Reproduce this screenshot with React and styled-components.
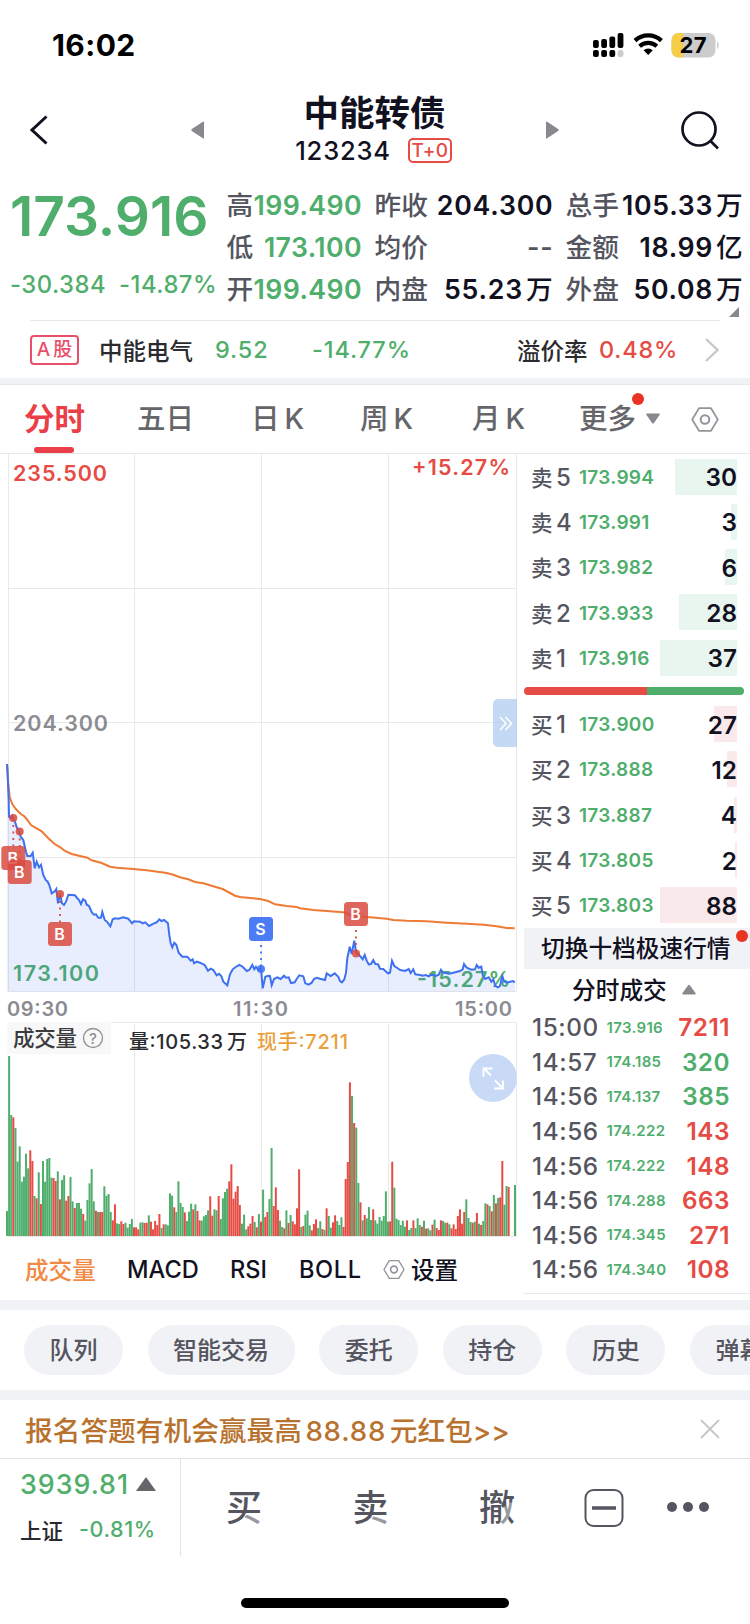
import React from 'react'
import styled, { createGlobalStyle, css } from 'styled-components'

const RED = '#e64b44'
const GREEN = '#4fae6c'
const INK = '#11111f'
const SLATE = '#55555f'
const BAND = '#f1f2f6'
const LINE = '#e9e9eb'

const GlobalStyle = createGlobalStyle`
  * {
    box-sizing: border-box;
  }

  body {
    margin: 0;
    background: #fff;
    color: ${INK};
    font-family: Inter, 'Noto Sans CJK SC', sans-serif;
    font-weight: 500;
    overflow: hidden;
  }
`

const Screen = styled.div`
  width: 750px;
  height: 1624px;
  background: #fff;
  overflow: hidden;
  white-space: nowrap;
`

// ---------- status bar ----------
const StatusBar = styled.div`
  display: flex;
  justify-content: space-between;
  align-items: center;
  height: 86px;
  padding: 4px 31px 0 52px;
`

const Clock = styled.div`
  font-size: 30px;
  font-weight: 700;
  color: #000;
  letter-spacing: 0.4px;
`

// ---------- header ----------
const Header = styled.header`
  display: flex;
  justify-content: space-between;
  align-items: center;
  height: 88px;
  padding: 0 30px 0 29px;
`

const Switcher = styled.div`
  display: flex;
  align-items: center;
  justify-content: space-between;
  width: 368px;
  margin-left: 20px;
`

const TitleBlock = styled.div`
  display: flex;
  flex-direction: column;
  align-items: center;
`

const Title = styled.h1`
  margin: 0;
  padding-top: 1px;
  font-size: 35.5px;
  line-height: 40px;
  font-weight: 700;
`

const CodeRow = styled.div`
  display: flex;
  align-items: center;
  gap: 17px;
  height: 32px;
  margin: 0 2px 1px 0;
  font-size: 25.5px;
  letter-spacing: 0.8px;
`

const DayTag = styled.span`
  width: 44px;
  height: 25px;
  border: 2px solid ${RED};
  border-radius: 5px;
  color: ${RED};
  font-size: 19px;
  line-height: 21px;
  text-align: center;
  letter-spacing: 0.2px;
`

// ---------- quote ----------
const Quote = styled.section`
  position: relative;
  display: flex;
  height: 146px;
  padding: 10px 0 0 11px;
`

const PriceBlock = styled.div`
  width: 215.5px;
  color: ${GREEN};
`

const BigPrice = styled.div`
  margin-left: -1px;
  font-size: 55px;
  line-height: 64px;
  font-weight: 600;
  letter-spacing: 0;
`

const Change = styled.div`
  display: flex;
  gap: 13px;
  margin: 22px 0 0 -1px;
  font-size: 23.8px;
  line-height: 30px;
  letter-spacing: 0.5px;
`

const Stats = styled.div`
  display: flex;
`

const StatColumn = styled.dl`
  width: ${({ $width }) => $width}px;
  margin: 0 ${({ $gap }) => $gap}px 0 0;
`

const Stat = styled.div`
  display: flex;
  justify-content: space-between;
  height: 42px;
  font-size: 26.7px;
  line-height: 43px;
  color: ${SLATE};
`

const StatValue = styled.dd`
  margin: 0;
  font-size: 26.7px;
  letter-spacing: ${({ $spacing }) => $spacing}px;
  font-weight: 600;
  color: ${({ $color }) => $color || INK};
`

const Unit = styled.span`
  margin-left: ${({ $gap }) => $gap || 4}px;
  font-weight: 500;
`

const Corner = styled.svg`
  position: absolute;
  right: 11px;
  bottom: 3px;
`

const RelatedRow = styled.div`
  display: flex;
  align-items: center;
  height: 58px;
  margin: 0 30px;
  border-top: 1px solid ${LINE};
  font-size: 23.5px;
  color: #2b2b2f;
`

const MarketTag = styled.span`
  width: 49px;
  height: 30px;
  margin-right: 20px;
  border: 2px solid #e8506a;
  border-radius: 4px;
  color: #e8506a;
  font-size: 19px;
  line-height: 26px;
  text-align: center;
`

const Cell = styled.span`
  width: ${({ $width }) => $width}px;
  letter-spacing: ${({ $spacing }) => $spacing || 0}px;
  color: ${({ $color }) => $color || 'inherit'};
`

const Band = styled.div`
  height: ${({ $height }) => $height || 10}px;
  background: ${BAND};
`

// ---------- period tabs ----------
const Tabs = styled.nav`
  display: flex;
  align-items: center;
  height: 70px;
  padding-left: 24px;
  border-top: 1px solid ${LINE};
  border-bottom: 1px solid ${LINE};
`

const Tab = styled.span`
  position: relative;
  width: ${({ $width }) => $width}px;
  font-size: 28.5px;
  line-height: 68px;
  color: #66666a;

  ${({ $active }) =>
    $active &&
    css`
      font-size: 30.5px;
      font-weight: 700;
      color: #ea3f48;

      &::after {
        content: '';
        position: absolute;
        left: 10px;
        bottom: 0;
        width: 40px;
        height: 6px;
        border-radius: 3px;
        background: #ea3f48;
      }
    `}
`

const Dot = styled.i`
  position: absolute;
  top: ${({ $top }) => $top}px;
  right: ${({ $right }) => $right}px;
  width: 12px;
  height: 12px;
  border-radius: 50%;
  background: #ea3323;
`

// ---------- body ----------
const Body = styled.main`
  display: flex;
  height: 846px;
`

const ChartColumn = styled.div`
  width: 517px;
`

const Plot = styled.svg`
  display: block;
`

const Indicators = styled.div`
  display: flex;
  align-items: center;
  height: 62px;
  padding-left: 25px;
  font-size: 23.6px;
`

const Book = styled.aside`
  width: 226px;
  height: 840px;
  margin-left: 7px;
  border-bottom: 1px solid ${LINE};
`

const BookRow = styled.div`
  position: relative;
  display: flex;
  align-items: center;
  height: 45.3px;
  padding: 1px 13px 0 7px;
`

const BookLabel = styled.span`
  display: flex;
  align-items: center;
  width: 48px;
  font-size: 24px;
  color: ${SLATE};

  b {
    width: 25px;
    margin-top: -2px;
    font-size: 21.5px;
    font-weight: 500;
  }
`

const BookPrice = styled.span`
  font-size: 19px;
  font-weight: 600;
  letter-spacing: 0.3px;
  color: ${GREEN};
`

const BookAmount = styled.span`
  position: relative;
  margin-left: auto;
  font-size: 24.3px;
  font-weight: 600;
`

const Depth = styled.i`
  position: absolute;
  right: 13px;
  top: 4.5px;
  height: 36px;
  background: ${({ $side }) => ($side === '卖' ? '#e9f6ef' : '#fae9ea')};
`

const Ratio = styled.div`
  width: 220px;
  height: 8px;
  margin: 6.5px 0;
  border-radius: 4px;
  background: linear-gradient(to right, ${RED} 123px, ${GREEN} 123px);
`

const DepthSwitch = styled.div`
  position: relative;
  height: 41px;
  padding-left: 17px;
  background: ${BAND};
  font-size: 23.7px;
  line-height: 42px;
`

const TradesTitle = styled.div`
  display: flex;
  align-items: center;
  gap: 15px;
  height: 41px;
  padding-left: 48px;
  font-size: 23.7px;
`

const Trade = styled.div`
  display: flex;
  align-items: center;
  height: 34.57px;
  padding: 0 20px 0 8px;
`

const TradeTime = styled.span`
  width: 74.5px;
  font-size: 24.3px;
  letter-spacing: 0.6px;
  color: ${SLATE};
`

const TradePrice = styled.span`
  font-size: 15px;
  font-weight: 600;
  letter-spacing: 0.35px;
  color: ${GREEN};
`

const TradeAmount = styled.span`
  margin-left: auto;
  font-size: 24.3px;
  font-weight: 600;
  letter-spacing: 0.5px;
  color: ${({ $up }) => ($up ? RED : GREEN)};
`

// ---------- lower part ----------
const Pills = styled.div`
  display: flex;
  gap: 24.6px;
  height: 80px;
  padding: 15px 0 0 24px;
`

const Pill = styled.span`
  flex: none;
  height: 50px;
  padding: 0 25.5px;
  border-radius: 25px;
  background: ${BAND};
  font-size: 24px;
  line-height: 51px;
  color: ${SLATE};
`

const Banner = styled.div`
  display: flex;
  justify-content: space-between;
  align-items: center;
  height: 59px;
  padding: 0 30px 0 25px;
  border-bottom: 1px solid #e2e2e4;
  font-size: 27.7px;
  color: #b8722e;
`

const BannerSum = styled.span`
  margin: 0 3.5px;
  letter-spacing: 0.8px;
`

const BottomBar = styled.footer`
  display: flex;
  height: 97px;
`

const IndexBlock = styled.div`
  width: 181px;
  padding: 7px 0 0 20px;
  border-right: 1px solid #e2e2e4;
`

const IndexRow = styled.div`
  display: flex;
  align-items: center;
  gap: ${({ $gap }) => $gap}px;
  height: 36px;
  margin-bottom: 9px;
  font-size: ${({ $size }) => $size}px;
  color: ${({ $color }) => $color};
`

const Actions = styled.div`
  display: flex;
  align-items: center;
  padding-left: 45px;
`

// part of the last stroke is washed out
const Action = styled.span`
  position: relative;
  width: ${({ $width }) => $width || 126.5}px;
  font-size: 36px;
  line-height: 50px;
  color: ${SLATE};

  &::after {
    content: '';
    position: absolute;
    left: 0;
    top: 0;
    width: 38px;
    height: 50px;
    background: rgba(255, 255, 255, 0.4);
    clip-path: ${({ $fade }) => $fade};
  }
`

const HomeIndicator = styled.div`
  width: 268px;
  height: 10px;
  margin: 42px auto 0;
  border-radius: 5px;
  background: #000;
`

// ---------- data ----------
const statColumns = [
  { width: 135.5, gap: 12.5, spacing: 0.4, rows: [['高', '199.490'], ['低', '173.100'], ['开', '199.490']], color: GREEN },
  { width: 179, gap: 12, spacing: 0.8, rows: [['昨收', '204.300'], ['均价', '--'], ['内盘', '55.23', '万']] },
  { width: 178, gap: 0, spacing: 0.7, rows: [['总手', '105.33', '万'], ['金额', '18.99', '亿'], ['外盘', '50.08', '万']] },
]

const asks = [
  [5, '173.994', 30, 62],
  [4, '173.991', 3, 6],
  [3, '173.982', 6, 12],
  [2, '173.933', 28, 58],
  [1, '173.916', 37, 77],
]

const bids = [
  [1, '173.900', 27, 23],
  [2, '173.888', 12, 10],
  [3, '173.887', 4, 3],
  [4, '173.805', 2, 2],
  [5, '173.803', 88, 77],
]

const trades = [
  ['15:00', '173.916', 7211, true],
  ['14:57', '174.185', 320, false],
  ['14:56', '174.137', 385, false],
  ['14:56', '174.222', 143, true],
  ['14:56', '174.222', 148, true],
  ['14:56', '174.288', 663, true],
  ['14:56', '174.345', 271, true],
  ['14:56', '174.340', 108, true],
]

const pills = ['队列', '智能交易', '委托', '持仓', '历史', '弹幕']

// samples are stored in thirds of a pixel, one list per trading session
const priceAm =
  '21,72 22,80 26,180 27,230 33,235 37,228 40,238 45,245 50,262 58,275 62,290 70,300 78,335 82,348 92,348 98,338 104,385 110,365 117,382 123,374 130,405 137,420 143,425 148,435 155,460 165,453 169,447 174,490 180,462 186,490 192,495 198,485 205,464 225,466 232,475 237,480 243,492 249,478 256,482 260,494 267,498 276,518 282,524 288,523 295,533 303,533 307,516 314,540 321,545 331,559 338,538 345,535 355,536 370,532 385,536 396,550 402,544 420,545 428,550 436,547 447,558 462,550 470,547 478,538 484,543 492,540 504,550 508,585 512,610 517,622 523,608 529,614 536,638 547,650 562,650 572,662 578,658 582,670 590,665 600,668 614,675 624,692 632,686 640,690 650,706 657,701 664,708 670,725 682,736 690,703 698,688 707,681 718,675 728,680 740,693 748,690 757,675 763,688 768,680 775,690 783,684'
const pricePm =
  '3,865 8,925 16,890 25,887 30,888 35,916 42,897 52,892 62,897 72,887 78,893 86,892 93,909 104,907 110,897 118,886 130,889 136,910 146,914 155,908 162,897 170,893 180,896 195,900 200,880 212,888 224,880 235,890 240,903 246,907 253,898 258,878 262,835 269,800 275,822 279,802 283,782 288,815 294,822 302,830 308,838 314,825 320,842 326,853 333,852 340,840 346,852 354,853 360,866 370,867 376,873 384,880 390,878 396,842 403,858 412,864 421,870 435,873 446,867 452,879 460,868 466,883 480,885 488,887 498,885 506,889 515,884 528,888 536,884 543,869 549,878 560,880 568,881 580,878 600,873 608,868 612,852 620,863 634,869 645,868 650,855 656,863 664,860 668,885 676,897 686,892 694,905 700,898 706,918 714,922 720,918 727,888 732,903 740,908 750,905 760,903 764,908'
const averageAm =
  '21,72 25,130 29,172 37,192 48,208 62,222 72,228 80,237 93,255 105,262 125,274 145,295 165,313 182,323 195,333 215,342 240,348 262,353 275,361 305,369 330,380 350,383 400,387 440,391 500,399 520,404 540,412 565,418 585,426 610,430 640,439 668,447 690,459 705,467 720,471 750,474'
const averagePm =
  '0,657 25,663 45,673 80,678 110,681 120,685 160,690 250,697 262,700 275,708 330,712 380,716 400,720 440,722 500,724 560,728 620,731 670,734 705,738 740,744 764,745'

const toPixels = (list, dx, dy) =>
  list.split(' ').map((pair) => {
    const [x, y] = pair.split(',')
    return `${(x / 3 + dx).toFixed(1)},${(y / 3 + dy).toFixed(1)}`
  })

const joinSessions = (am, pm) => [...toPixels(am, 0, 286), ...toPixels(pm, 260, 226)].join(' ')

const pricePoints = joinSessions(priceAm, pricePm)
const averagePoints = joinSessions(averageAm, averagePm)

// one entry per minute, colour letter + height in thirds of a pixel
const volumes = (
  'g75 g540 g363 r356 g324 g223 g269 g163 g178 g247 g203 r257 r225 g120 r113 g191 r96 g225 g163 g231 g234 g175 r174 r165 g194 r110 g168 g182 r106 r120 ' +
  'g177 g104 r84 g99 g99 g82 r66 g46 g108 g158 g201 g104 r76 g72 r72 r72 g149 g121 g126 g72 r47 r95 g38 g36 r44 r36 g40 g25 g36 g51 ' +
  'r26 r26 r20 g40 g41 r39 r40 g62 r43 r20 r45 r33 r66 g24 r35 g35 g32 g128 g121 r86 g72 g164 g99 g87 r71 g45 g73 g97 r80 g95 ' +
  'r75 r47 g46 g59 g63 g77 r119 r61 g80 g77 r120 g51 g113 g132 g142 r164 r215 r112 r133 r150 r93 g37 g64 g20 r29 r37 r60 g42 r26 g66 ' +
  'r43 g139 r57 r72 g111 g264 r90 r146 r78 g46 g27 r23 g77 r39 g63 r44 r35 r83 r200 g27 r30 g64 g76 g32 r17 r36 r50 g24 g44 r21 ' +
  'g18 r83 g60 g25 r41 r62 g45 g33 g56 r27 r171 r222 r461 g420 r339 g325 g159 r101 g47 r63 g53 g87 g48 r80 g47 g37 g57 g46 g60 g134 ' +
  'g43 r44 r223 g145 g52 g48 g33 g46 g28 r47 g18 g24 r47 g24 g53 g33 r28 g46 r22 g23 g17 r34 g49 r24 r18 r47 g45 g40 r40 g35 ' +
  'r23 r35 r21 r60 r80 r37 r72 g110 g54 g42 r40 g43 r69 g37 r33 g45 g98 r95 g90 r74 g123 r98 g114 r116 r225 g94 g150 r147 g0 g0 g153'
).split(' ')

const gridX = [134.5, 261.5, 388.5]

const marks = [
  { x: 13.3, dot: 364, box: 404, label: 'B' },
  { x: 19.7, dot: 377.5, box: 418, label: 'B' },
  { x: 60, dot: 440, box: 480, label: 'B' },
  { x: 261, dot: 515, box: 475, label: 'S' },
  { x: 356, dot: 499.5, box: 460, label: 'B' },
]

// ---------- drawings ----------
const Nut = ({ width, height }) => (
  <svg width={width} height={height} viewBox="0 0 28 25" fill="none" stroke="#94949a" strokeWidth="1.7">
    <path d="M8 1.2h12l6.8 11.3L20 23.8H8L1.2 12.5z" strokeLinejoin="round" />
    <circle cx="14" cy="12.5" r="4.3" strokeWidth="2" />
  </svg>
)

function StatusIcons() {
  return (
    <svg width="127" height="28" viewBox="0 0 127 28">
      {[0, 1, 2, 3].map((i) => (
        <g key={i}>
          <rect x={1 + i * 8.2} y={[9, 8, 5.5, 2][i]} width="5.8" height={[8, 9, 11.5, 15][i]} rx="2" />
          <rect x={1 + i * 8.2} y="19" width="5.8" height="7" rx="2" fill={i === 3 ? '#ccc' : '#000'} />
        </g>
      ))}
      <g fill="none" stroke="#000" strokeWidth="4.2">
        <path d="M43 9.6a19.5 19.5 0 0 1 26.4 0" />
        <path d="M47.6 15.2a12.8 12.8 0 0 1 17.2 0" />
      </g>
      <path d="M51.6 19.3a6.6 6.6 0 0 1 9.2 0L56.2 24z" />
      <clipPath id="battery">
        <rect x="79.5" y="2" width="44" height="24.5" rx="7" />
      </clipPath>
      <g clipPath="url(#battery)">
        <rect x="79" y="2" width="45" height="25" fill="#ccc" />
        <rect x="79" y="2" width="12" height="25" fill="#f5cd46" />
      </g>
      <path d="M125 10.5c2.4 1.2 2.4 6.3 0 7.5z" fill="#ccc" />
      <text x="101" y="22.2" textAnchor="middle" fontSize="22" fontWeight="700" textLength="27">27</text>
    </svg>
  )
}

function PriceChart() {
  return (
    <Plot width="517" height="568" fontSize="21.5" fontWeight="600">
      <g stroke={LINE} fill="none">
        {gridX.map((x) => <path key={x} d={`M${x} 0V537`} />)}
        {[134.5, 268.5, 403.5].map((y) => <path key={y} d={`M8 ${y}H516`} />)}
        <path d="M8.5 0V537.5H516.5V0" />
      </g>
      <text x="13" y="27" fill={RED} textLength="94">235.500</text>
      <text x="510" y="21" fill={RED} textAnchor="end" textLength="98">+15.27%</text>
      <text x="13" y="277" fill="#8b8b91" textLength="95">204.300</text>
      <text x="13" y="527" fill={GREEN} textLength="86">173.100</text>
      <text x="510" y="533" fill={GREEN} textAnchor="end" textLength="93">-15.27%</text>
      <polygon points={`7,537.5 ${pricePoints} 515,537.5`} fill="rgba(64,116,240,.12)" />
      <polyline points={averagePoints} fill="none" stroke="#ee7a34" strokeWidth="2" />
      <polyline points={pricePoints} fill="none" stroke="#3d71f2" strokeWidth="2" />
      {marks.map(({ x, dot, box, label }) => {
        const sell = label === 'S'
        const color = sell ? '#3d71f2' : '#d94b41'
        return (
          <g key={x}>
            <path
              d={box > dot ? `M${x} ${dot + 7}V${box - 12}` : `M${x} ${box + 16}V${dot}`}
              stroke={color}
              strokeWidth="1.8"
              strokeDasharray="2 4.5"
            />
            <circle cx={x} cy={dot} r="4" fill={color} opacity=".88" />
            <rect x={x - 12} y={box - 12} width="24" height="24" rx="3.5" fill={color} opacity={sell ? 0.92 : 0.85} />
            <text x={x - 0.5} y={box + 6} fill="#fff" fontSize="16" textAnchor="middle">{label}</text>
          </g>
        )
      })}
      <path d="M517 245H498a5 5 0 0 0-5 5V288a5 5 0 0 0 5 5H517z" fill="#9cc2ec" opacity=".6" />
      <path d="M500 263l6 6.5-6 6.5M505.5 263l6 6.5-6 6.5" fill="none" stroke="#fff" strokeWidth="1.6" />
      <g fill="#8b8b92" fontSize="20">
        <text x="7" y="561.5" textLength="61">09:30</text>
        <text x="233" y="561.5" textLength="55">11:30</text>
        <text x="455" y="561.5" textLength="57">15:00</text>
      </g>
    </Plot>
  )
}

function VolumeChart() {
  return (
    <Plot width="517" height="216" fontSize="20">
      <g stroke={LINE} fill="none">
        {gridX.map((x) => <path key={x} d={`M${x} 2V214`} />)}
        <path d="M8 .5H516.5V214.5H8" />
      </g>
      <rect x="7" y="0" width="104" height="32" fill="#f8f8f8" />
      <text x="13" y="24" fontSize="21.5" fill="#3c3c40" textLength="64">成交量</text>
      <circle cx="93" cy="16" r="9.5" fill="none" stroke="#8f8f96" strokeWidth="1.3" />
      <text x="93" y="21.5" fontSize="15" fill="#8f8f96" textAnchor="middle">?</text>
      <text x="129" y="26.5" fill="#2b2b2f" textLength="94">量:105.33</text>
      <text x="227" y="26.5" fill="#2b2b2f">万</text>
      <text x="257" y="26.5" fill="#eb9f3c" textLength="91">现手:7211</text>
      {volumes.map((entry, i) => {
        const height = Number(entry.slice(1)) / 3
        return (
          <rect
            key={i}
            x={6 + i * 2.1167}
            y={214 - height}
            width="2"
            height={height}
            fill={entry[0] === 'r' ? RED : GREEN}
          />
        )
      })}
      <circle cx="493" cy="56" r="24" fill="#c8daf6" />
      <path d="M491 53.5l-7-7M483.5 54.5v-8h9M495 58.5l7 7M494 66.5h9v-8" fill="none" stroke="#fff" strokeWidth="1.9" />
    </Plot>
  )
}

const BookRows = ({ side, rows }) =>
  rows.map(([level, price, amount, depth]) => (
    <BookRow key={level}>
      <Depth $side={side} style={{ width: depth }} />
      <BookLabel><b>{side}</b>{level}</BookLabel>
      <BookPrice>{price}</BookPrice>
      <BookAmount>{amount}</BookAmount>
    </BookRow>
  ))

export default function App() {
  return (
    <Screen>
      <GlobalStyle />
      <StatusBar>
        <Clock>16:02</Clock>
        <StatusIcons />
      </StatusBar>

      <Header>
        <svg width="20" height="32" fill="none" stroke={INK} strokeWidth="3">
          <path d="M17.5 2.5L3 16l14.5 13.5" />
        </svg>
        <Switcher>
          <svg width="13" height="18" fill="#88888f"><path d="M13 1v16q0 1-1.5 0L.8 10q-1-1 0-2L11.5 1q1.5-1 1.5 0z" /></svg>
          <TitleBlock>
            <Title>中能转债</Title>
            <CodeRow>123234<DayTag>T+0</DayTag></CodeRow>
          </TitleBlock>
          <svg width="13" height="18" fill="#88888f"><path d="M0 1v16q0 1 1.5 0l10.7-7q1-1 0-2L1.5 1Q0 0 0 1z" /></svg>
        </Switcher>
        <svg width="40" height="40" fill="none" stroke={INK} strokeWidth="2.7">
          <circle cx="19" cy="19" r="16.5" />
          <path d="M30 30.5l8 8" />
        </svg>
      </Header>

      <Quote>
        <PriceBlock>
          <BigPrice>173.916</BigPrice>
          <Change><span>-30.384</span><span>-14.87%</span></Change>
        </PriceBlock>
        <Stats>
          {statColumns.map(({ width, gap, spacing, rows, color }) => (
            <StatColumn key={rows[0][0]} $width={width} $gap={gap}>
              {rows.map(([name, value, unit]) => (
                <Stat key={name}>
                  <dt>{name}</dt>
                  <StatValue $spacing={spacing} $color={value === '--' ? SLATE : color}>
                    {value}
                    {unit && <Unit $gap={3}>{unit}</Unit>}
                  </StatValue>
                </Stat>
              ))}
            </StatColumn>
          ))}
        </Stats>
        <Corner width="10" height="10"><path d="M10 0v10H0z" fill="#88888f" /></Corner>
      </Quote>

      <RelatedRow>
        <MarketTag>A<Unit $gap={3}>股</Unit></MarketTag>
        <Cell $width={116}>中能电气</Cell>
        <Cell $width={97} $color={GREEN} $spacing={0.9}>9.52</Cell>
        <Cell $width={205} $color={GREEN} $spacing={0.9}>-14.77%</Cell>
        <Cell $width={82}>溢价率</Cell>
        <Cell $width={106} $color={RED} $spacing={0.8}>0.48%</Cell>
        <svg width="14" height="24" fill="none" stroke="#c8c8cc" strokeWidth="2.4"><path d="M1 1l11.5 11L1 23" /></svg>
      </RelatedRow>
      <Band $height={6} />

      <Tabs>
        <Tab $width={113} $active>分时</Tab>
        <Tab $width={114}>五日</Tab>
        <Tab $width={109}>日<Unit $gap={5}>K</Unit></Tab>
        <Tab $width={112}>周<Unit $gap={5}>K</Unit></Tab>
        <Tab $width={107}>月<Unit $gap={5}>K</Unit></Tab>
        <Tab $width={66}>更多<Dot $top={8} $right={1} /></Tab>
        <Cell $width={46}>
          <svg width="16" height="12" fill="#88888f"><path d="M2 .5h12q1.5 0 .5 1.5L9 10q-1 1-2 0L1.5 2Q.5.5 2 .5z" /></svg>
        </Cell>
        <Nut width={28} height={25} />
      </Tabs>

      <Body>
        <ChartColumn>
          <PriceChart />
          <VolumeChart />
          <Indicators>
            <Cell $width={102} $color="#f08a44">成交量</Cell>
            <Cell $width={103}>MACD</Cell>
            <Cell $width={69}>RSI</Cell>
            <Cell $width={84} $spacing={0.6}>BOLL</Cell>
            <Nut width={22} height={21} />
            <Unit $gap={6}>设置</Unit>
          </Indicators>
        </ChartColumn>
        <Book>
          <BookRows side="卖" rows={asks} />
          <Ratio />
          <BookRows side="买" rows={bids} />
          <DepthSwitch>切换十档极速行情<Dot $top={2} $right={2} /></DepthSwitch>
          <TradesTitle>
            分时成交
            <svg width="14" height="11" fill="#88888f"><path d="M1.5 10.5Q-.5 10.5.5 9L6 1.5q1-1.5 2 0L13.5 9q1 1.5-1 1.5z" /></svg>
          </TradesTitle>
          {trades.map(([time, price, amount, up], i) => (
            <Trade key={i}>
              <TradeTime>{time}</TradeTime>
              <TradePrice>{price}</TradePrice>
              <TradeAmount $up={up}>{amount}</TradeAmount>
            </Trade>
          ))}
        </Book>
      </Body>

      <Band />
      <Pills>
        {pills.map((name) => <Pill key={name}>{name}</Pill>)}
      </Pills>
      <Band />

      <Banner>
        <span>报名答题有机会赢最高<BannerSum>88.88</BannerSum>元红包&gt;&gt;</span>
        <svg width="20" height="20" stroke="#c6c6ca" strokeWidth="1.8"><path d="M1 1l18 18M19 1L1 19" /></svg>
      </Banner>

      <BottomBar>
        <IndexBlock>
          <IndexRow $gap={7} $size={26.8} $color={GREEN}>
            <Cell $color={GREEN} $spacing={1}>3939.81</Cell>
            <svg width="20" height="14" fill="#66666a"><path d="M10 0l10 14H0z" /></svg>
          </IndexRow>
          <IndexRow $gap={16} $size={21.5} $color="#2b2b2f">
            上证<Cell $color={GREEN} $spacing={0.6}>-0.81%</Cell>
          </IndexRow>
        </IndexBlock>
        <Actions>
          <Action $fade="polygon(20px 31px, 38px 31px, 38px 44px, 30px 44px, 20px 36px)">买</Action>
          <Action $fade="polygon(20px 34px, 38px 34px, 38px 44px, 30px 44px, 20px 38px)">卖</Action>
          <Action $width={105} $fade="polygon(28px 20px, 38px 20px, 31px 34px, 22px 44px, 19px 44px)">撤</Action>
          <svg width="135" height="40" viewBox="0 0 135 40">
            <rect x="1.5" y="2" width="37" height="36" rx="8" fill="none" stroke={SLATE} strokeWidth="2" />
            <path d="M8 20h24" stroke={SLATE} strokeWidth="3.5" />
            {[88, 104, 120].map((cx) => <circle key={cx} cx={cx} cy="19" r="5" fill={SLATE} />)}
          </svg>
        </Actions>
      </BottomBar>
      <HomeIndicator />
    </Screen>
  )
}
